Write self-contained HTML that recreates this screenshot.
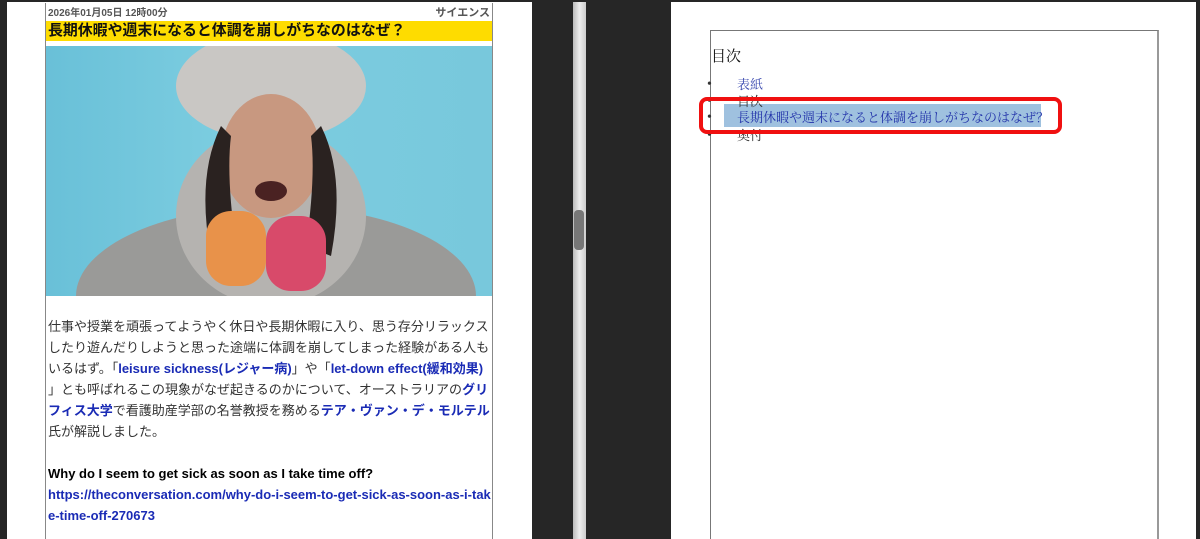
<!DOCTYPE html><html><head><meta charset="utf-8"><style>
html,body{margin:0;width:1200px;height:539px;overflow:hidden}
body{background:#262626;position:relative;font-family:"Liberation Sans","Noto Sans CJK JP",sans-serif}
.a{position:absolute}
.lp{left:7px;top:2px;width:525px;height:537px;background:#fff}
.box{left:45px;top:3px;width:446px;height:540px;border:1px solid #888;border-top:none;background:#fff}
.date{left:48px;top:4px;font-size:10px;color:#555;font-weight:bold}
.cat{left:430px;top:4px;font-size:11px;color:#555;font-weight:bold;width:60px;text-align:right}
.ttl{left:46px;top:21px;width:446px;height:20px;background:#fedc00;font-size:14.9px;font-weight:bold;line-height:20px;text-indent:2px;color:#111}
.img{left:46px;top:46px;width:446px;height:250px;background:linear-gradient(90deg,#69c0d8,#7ccde0 40%,#78c8dc);overflow:hidden}
.txt{left:48px;top:316px;width:460px;font-size:13px;line-height:21px;color:#333;white-space:nowrap}
.txt b{color:#1a2bb5}
.rp{left:671px;top:2px;width:525px;height:537px;background:#fff}
.rbox{left:710px;top:30px;width:446px;height:520px;border:1px solid #777;border-right:2px solid #999}
.sb{left:573px;top:2px;width:13px;height:537px;background:linear-gradient(90deg,#bbb,#eee,#ccc)}
.li{position:relative;height:17px}
.li span{position:absolute;left:30px;top:0;font-size:13px}
</style></head><body>
<div class="a lp"></div>
<div class="a box"></div>
<div class="a date">2026年01月05日 12時00分</div>
<div class="a cat">サイエンス</div>
<div class="a ttl">長期休暇や週末になると体調を崩しがちなのはなぜ？</div>
<div class="a img">
<svg width="446" height="250">
<ellipse cx="230" cy="250" rx="200" ry="90" fill="#9a9a98"/>
<ellipse cx="225" cy="170" rx="95" ry="90" fill="#b5b3b0"/>
<ellipse cx="225" cy="40" rx="95" ry="55" fill="#c9c7c4"/>
<ellipse cx="225" cy="110" rx="50" ry="62" fill="#c89880"/>
<path d="M175 80 Q150 130 165 210 L190 200 Q180 130 185 90Z" fill="#2a2220"/>
<path d="M275 80 Q300 130 285 210 L260 200 Q270 130 265 90Z" fill="#2a2220"/>
<ellipse cx="225" cy="145" rx="16" ry="10" fill="#4a2222"/>
<rect x="160" y="165" width="60" height="75" rx="25" fill="#e8924a"/>
<rect x="220" y="170" width="60" height="75" rx="25" fill="#d84a6a"/>
</svg></div>
<div class="a txt">仕事や授業を頑張ってようやく休日や長期休暇に入り、思う存分リラックス<br>したり遊んだりしようと思った途端に体調を崩してしまった経験がある人も<br>いるはず。「<b>leisure sickness(レジャー病)</b>」や「<b>let-down effect(緩和効果)</b><br>」とも呼ばれるこの現象がなぜ起きるのかについて、オーストラリアの<b>グリ</b><br><b>フィス大学</b>で看護助産学部の名誉教授を務める<b>テア・ヴァン・デ・モルテル</b><br>氏が解説しました。<br><br><span style="color:#000;font-weight:bold">Why do I seem to get sick as soon as I take time off?</span><br><b>https://theconversation.com/why-do-i-seem-to-get-sick-as-soon-as-i-tak</b><br><b>e-time-off-270673</b></div>
<div class="a sb"></div>
<div class="a" style="left:574px;top:210px;width:10px;height:40px;background:#777;border-radius:4px"></div>
<div class="a rp"></div>
<div class="a rbox"></div>
<div class="a" style="left:711px;top:45px;font-family:'Liberation Serif','Noto Serif CJK SC',serif;font-size:15px;color:#111">目次</div>
<div class="a" style="left:724px;top:104px;width:317px;height:23px;background:#9fc1df"></div>
<div class="a" style="left:707px;top:76px;width:400px;font-family:'Liberation Serif','Noto Serif CJK SC',serif;font-size:14px;line-height:17px;color:#333">
<div class="li">•<span style="color:#3b4ab0">表紙</span></div>
<div class="li">•<span>目次</span></div>
<div class="li" style="top:-1px">•<span style="color:#2233aa">長期休暇や週末になると体調を崩しがちなのはなぜ？</span></div>
<div class="li">•<span>奥付</span></div></div>
<div class="a" style="left:699px;top:97px;width:355px;height:29px;border:4px solid #f01010;border-radius:8px"></div>
</body></html>
